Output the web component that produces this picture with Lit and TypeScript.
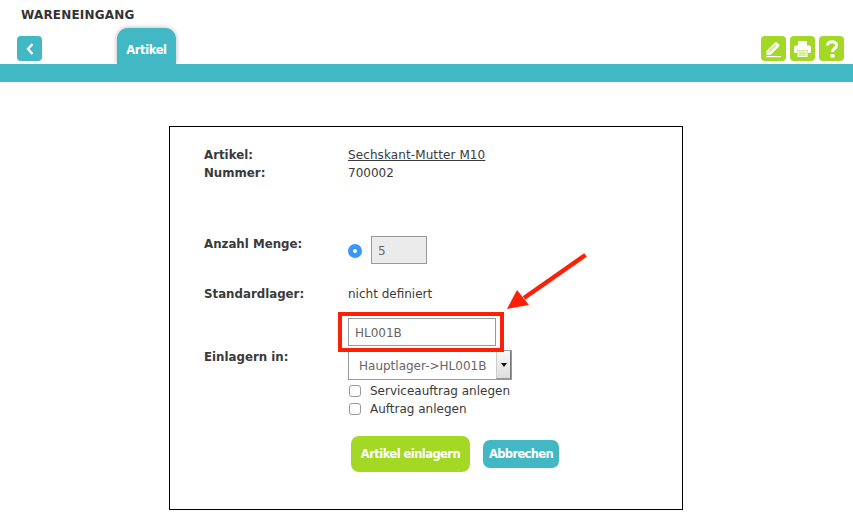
import { LitElement, html, css } from "lit";
import { customElement } from "lit/decorators.js";

@customElement("app-root")
export class AppRoot extends LitElement {
  static styles = css`
    :host { display: block; width: 853px; height: 521px; background: #fff; font-family: "DejaVu Sans", Verdana, sans-serif; font-size: 12px; color: #3a3a3a; overflow: hidden; }
    .header { height: 64px; box-sizing: border-box; position: relative; }
    .title { font-weight: 700; font-size: 12px; letter-spacing: .2px; color: #333; padding: 8px 0 0 21px; line-height: 14px; height: 14px; }
    .nav { display: flex; align-items: flex-start; padding: 6px 9px 0 17px; height: 36px; box-sizing: border-box; }
    .ib { width: 25px; height: 25px; border-radius: 4px; display: flex; align-items: center; justify-content: center; margin-top: 8px; }
    .teal { background: #43b8c5; }
    .green { background: #a3d924; }
    .tab { margin-left: 75px; width: 59px; height: 36px; background: #43b8c5; color: #fff; font-weight: 700; font-size: 11.5px; border-radius: 11px 11px 0 0; box-shadow: 0 0 5px rgba(0,0,0,.3); display: flex; align-items: center; justify-content: center; padding-top: 8px; box-sizing: border-box; letter-spacing: -0.4px; }
    .spacer { flex: 1; }
    .tools { display: flex; gap: 4px; }
    .bar { height: 18px; background: #43b8c5; position: relative; }
    .card { position: relative; margin: 44px 0 0 169px; width: 514px; height: 384px; box-sizing: border-box; border: 1px solid #000; padding: 19px 0 0 34px; }
    .row { display: flex; line-height: 18px; }
    .lab { width: 144px; font-weight: 700; flex: none; font-size: 11.8px; }
    a { color: inherit; text-decoration: underline; letter-spacing: .1px; }
    .qty { margin-top: 52px; height: 34px; }
    .qty .lab { padding-top: 1px; }
    .qtyv { display: flex; align-items: center; gap: 9px; height: 28px; margin-top: 2px; }
    .radio { width: 14px; height: 14px; border-radius: 50%; background: #3b97f5; display: flex; align-items: center; justify-content: center; margin-top: 2px; }
    .radio i { width: 4px; height: 4px; border-radius: 50%; background: #fff; display: block; }
    .field { box-sizing: border-box; border: 1px solid #999; color: #666; font-size: 12px; display: flex; align-items: center; padding-top: 1px; }
    .five { width: 56px; height: 28px; background: #ebebeb; padding-left: 6px; }
    .std { margin-top: 17px; }
    .ein { margin-top: 15px; display: flex; }
    .ein .lab { padding-top: 32px; }
    .col { display: flex; flex-direction: column; }
    .loc { width: 148px; height: 28px; padding-left: 6px; background: #fff; }
    .sel { width: 164px; height: 30px; margin-top: 4px; background: #fff; border: 1px solid #999; box-sizing: border-box; display: flex; align-items: center; color: #666; }
    .sel span { flex: 1; padding: 1px 0 0 10px; }
    .sel b { width: 15px; height: 28px; background: linear-gradient(#fafafa, #ddd); border-left: 1px solid #ccc; border-right: 1px solid #777; border-bottom: 1px solid #999; box-sizing: border-box; display: flex; align-items: center; justify-content: center; }
    .sel b::after { content: ""; border: 3.5px solid transparent; border-top: 4px solid #111; border-bottom: 0; }
    .chk { display: flex; align-items: center; height: 18px; gap: 9px; }
    .chks { margin-top: 2px; }
    .chk i { width: 12px; height: 12px; box-sizing: border-box; border: 1px solid #999; border-radius: 3px; background: #fff; display: block; margin-left: 1px; }
    .btns { display: flex; align-items: center; gap: 13px; margin: 18px 0 0 3px; }
    .btn { color: #fff; font-weight: 700; font-size: 11.5px; display: flex; align-items: center; justify-content: center; letter-spacing: -0.55px; }
    .b1 { width: 119px; height: 36px; background: #a3d924; border-radius: 8px; }
    .b2 { width: 76px; height: 28px; background: #43b8c5; border-radius: 7px; letter-spacing: -0.65px; }
    .mark { position: absolute; left: 0; top: 0; pointer-events: none; }
  `;

  render() {
    return html`
      <div class="header">
        <div class="title">WARENEINGANG</div>
        <div class="nav">
          <div class="ib teal">
            <svg width="10" height="14" viewBox="0 0 10 14"><path d="M7.5 2 L3 7 L7.5 12" fill="none" stroke="#fff" stroke-width="2.4"/></svg>
          </div>
          <div class="tab">Artikel</div>
          <div class="spacer"></div>
          <div class="tools">
            <div class="ib green">
              <svg width="19" height="19" viewBox="0 0 19 19">
                <path d="M2.5 12 L11 3.5 Q12 2.5 13 3.5 L15 5.5 Q16 6.5 15 7.5 L6.5 16 L2.5 16 Z" fill="#fff"/>
                <path d="M4 12.5 L11.5 5.5 L12.5 6.5 L5.5 13.5 Z" fill="#a3d924" opacity=".6"/>
                <rect x="2" y="17" width="15" height="1.2" fill="#fff"/>
              </svg>
            </div>
            <div class="ib green">
              <svg width="19" height="19" viewBox="0 0 19 19">
                <path d="M5 2 H14 V7 H5 Z" fill="#fff"/>
                <path d="M3 6.5 H16 Q18 6.5 18 8.5 V13 Q18 14 16 14 H15 V11 H4 V14 H3 Q1 14 1 13 V8.5 Q1 6.5 3 6.5 Z" fill="#fff"/>
                <rect x="5" y="12" width="9" height="5.5" fill="#d6f08f" stroke="#fff" stroke-width="1"/>
              </svg>
            </div>
            <div class="ib green">
              <svg width="14" height="20" viewBox="0 0 14 20">
                <path d="M2.5 6.5 C2.5 1.5 11.5 1.5 11.5 6.2 C11.5 9.5 7.5 9.5 7.5 13" fill="none" stroke="#fff" stroke-width="3"/>
                <rect x="5.5" y="15" width="4" height="3.6" fill="#fff"/>
              </svg>
            </div>
          </div>
        </div>
      </div>
      <div class="bar"></div>
      <div class="card">
        <div class="row"><div class="lab">Artikel:</div><a>Sechskant-Mutter M10</a></div>
        <div class="row"><div class="lab">Nummer:</div><div>700002</div></div>
        <div class="row qty">
          <div class="lab">Anzahl Menge:</div>
          <div class="qtyv"><div class="radio"><i></i></div><div class="field five">5</div></div>
        </div>
        <div class="row std"><div class="lab">Standardlager:</div><div>nicht definiert</div></div>
        <div class="ein">
          <div class="lab">Einlagern in:</div>
          <div class="col">
            <div class="field loc">HL001B</div>
            <div class="sel"><span>Hauptlager-&gt;HL001B</span><b></b></div>
            <div class="chks">
              <div class="chk"><i></i>Serviceauftrag anlegen</div>
              <div class="chk"><i></i>Auftrag anlegen</div>
            </div>
            <div class="btns"><div class="btn b1">Artikel einlagern</div><div class="btn b2">Abbrechen</div></div>
          </div>
        </div>
        <svg class="mark" width="512" height="382" viewBox="170 127 512 382">
          <rect x="340" y="314" width="162" height="36" fill="none" stroke="#fb2106" stroke-width="4"/>
          <path d="M585.5 255 L524 298" fill="none" stroke="#fb2106" stroke-width="4.5"/>
          <path d="M507 309 L517 290 L529 305 Z" fill="#fb2106"/>
        </svg>
      </div>
    `;
  }
}
